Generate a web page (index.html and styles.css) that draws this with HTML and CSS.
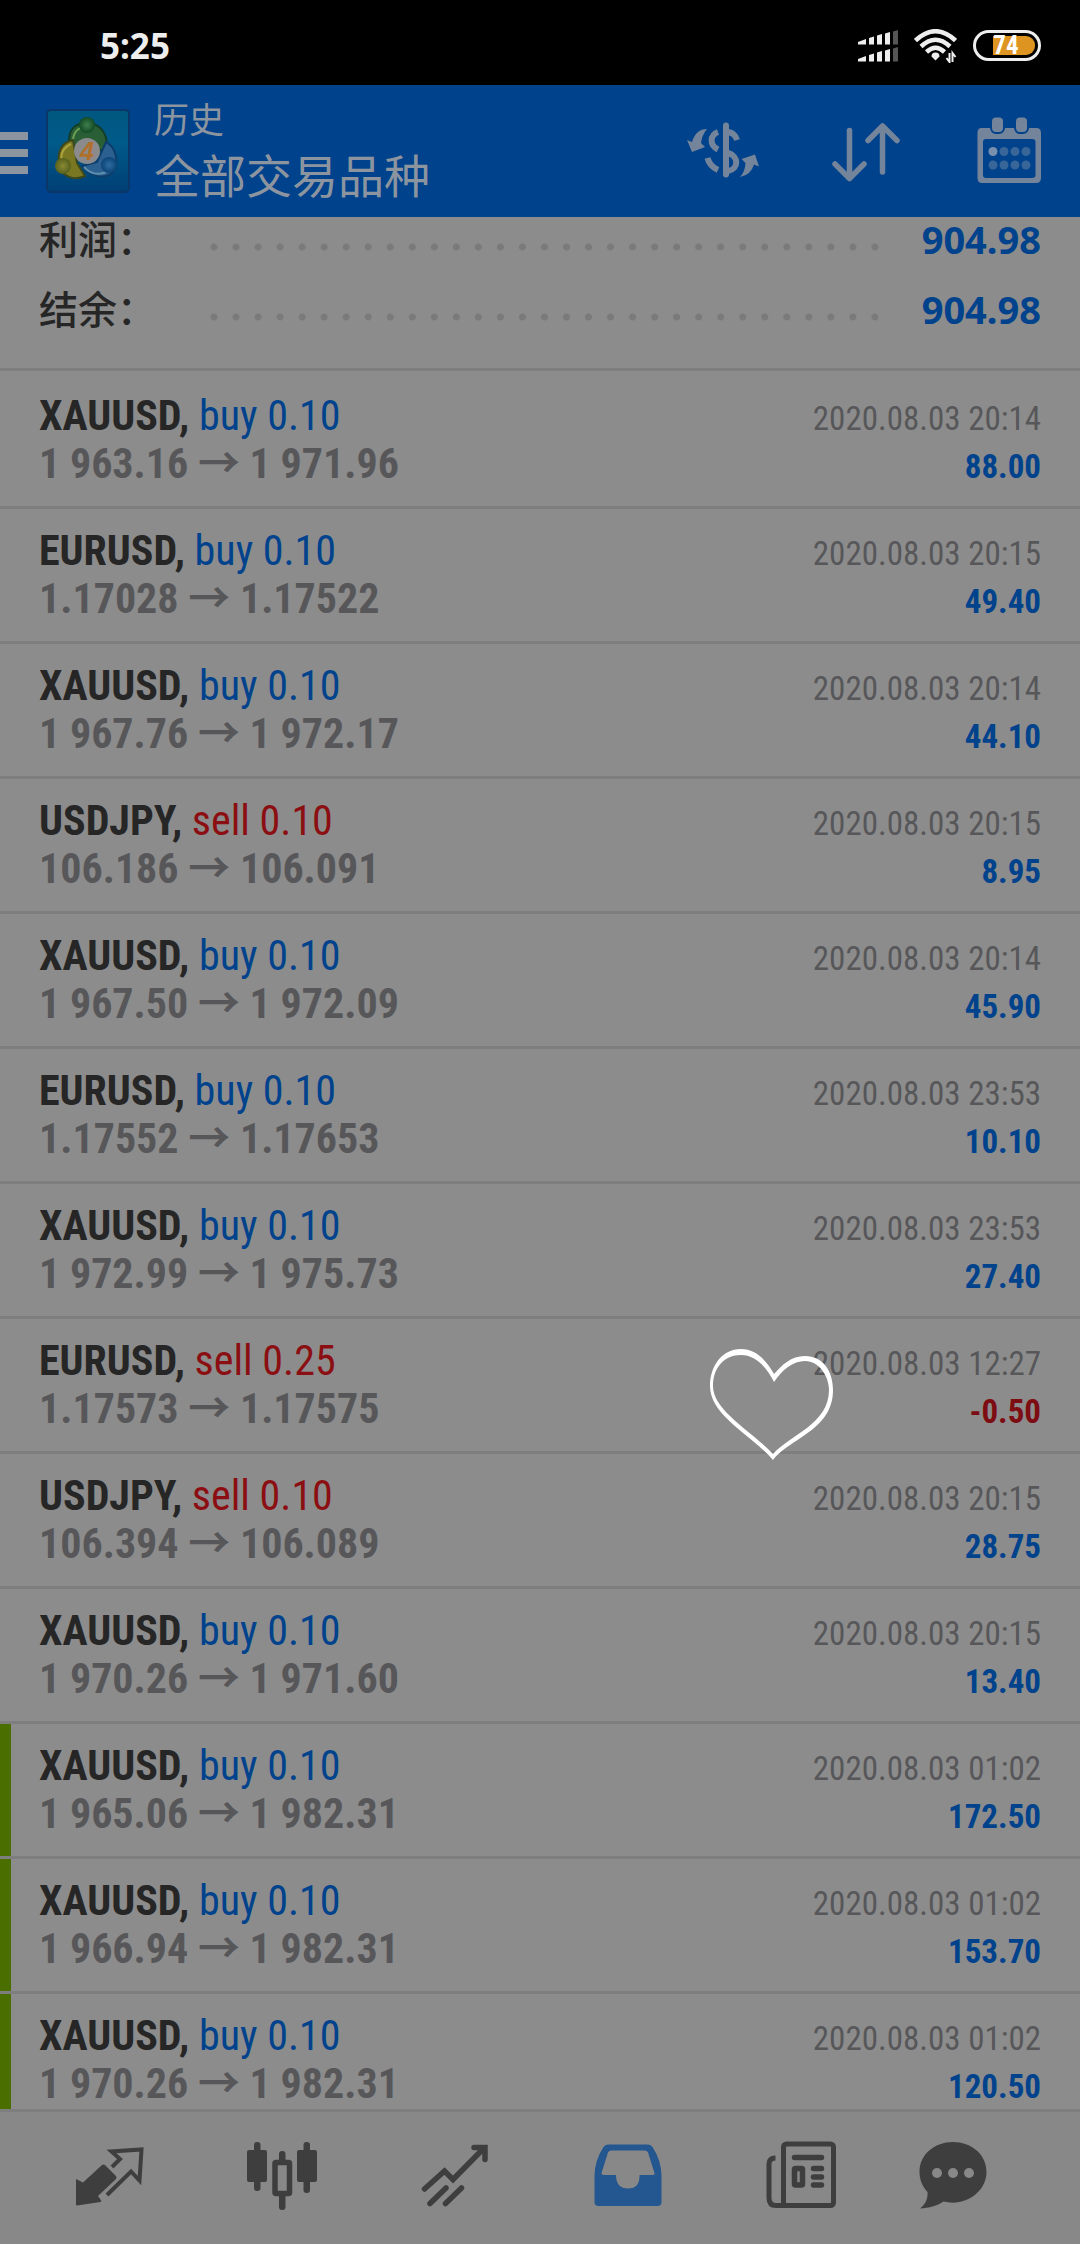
FILE: index.html
```html
<!DOCTYPE html>
<html lang="zh-CN">
<head>
<meta charset="utf-8">
<meta name="viewport" content="width=device-width, initial-scale=1">
<title>历史</title>
<link rel="stylesheet" href="styles.css">
</head>
<body>
<div class="status">
  <span class="clock">5:25</span>
  <div class="status-icons">
    <svg class="signal" viewBox="0 0 40 32" aria-hidden="true">
      <g fill="#eee"><path d="M0 12l8-3v5.500H0zM11 8l5-1.500v8h-5zM19 5.500l5-1.500v10.500h-5zM27 3.500l5-1.500v12.500h-5z"/><path d="M0 29l8-3v5.500H0zM11 25l5-1.500v8h-5zM19 22.500l5-1.500v10.500h-5zM27 20.500l5-1.500v12.500h-5z"/></g>
      <path d="M35 1.500L40 0v14.500h-5zM35 18.500L40 17v14.500h-5z" fill="#555"/>
    </svg>
    <svg class="wifi" viewBox="0 0 43 34" aria-hidden="true">
      <g fill="none" stroke="#eee" stroke-width="4.500"><path d="M1.500 11.500Q21.500-7 41.500 11.500"/><path d="M7 17.500Q21.500 4 36 17.500"/><path d="M12.500 23Q21.500 14.500 30.500 23"/></g>
      <path d="M21.500 31.500l-4-4q0-4 4-4t4 4z" fill="#eee"/>
      <path d="M35.500 24v9l-3-4M38.500 33v-9l3 4" fill="none" stroke="#eee" stroke-width="2"/>
    </svg>
    <span class="battery"><span class="charge"></span><span class="level">74</span></span>
  </div>
</div>

<header class="appbar">
  <button class="menu" aria-label="菜单"><i></i><i></i><i></i></button>
  <svg class="logo" viewBox="0 0 84 84" aria-hidden="true">
    <defs>
      <linearGradient id="lbg" x1="0" y1="0" x2="0" y2="1"><stop offset="0" stop-color="#00577f"/><stop offset=".4" stop-color="#005a8a"/><stop offset="1" stop-color="#003f75"/></linearGradient>
      <radialGradient id="lg"><stop offset="0" stop-color="#3f7f4c"/><stop offset="1" stop-color="#134a25"/></radialGradient>
      <radialGradient id="ly"><stop offset="0" stop-color="#8b8a34"/><stop offset="1" stop-color="#56601c"/></radialGradient>
      <radialGradient id="lb"><stop offset="0" stop-color="#2d6da0"/><stop offset="1" stop-color="#0c4477"/></radialGradient>
    </defs>
    <rect x="1" y="1" width="82" height="82" rx="4" fill="url(#lbg)" stroke="#0a3767" stroke-width="2"/>
    <g stroke-width="2">
      <path d="M23 35C22 18 31 14 41 14s20 7 20 23l-3 6-16-8-16 4z" fill="#2a5f35" stroke="#123e28"/>
      <path d="M27 31C28 21 33 18 41 18" fill="none" stroke="#6f9f55"/>
      <path d="M27 31C15 33 11 44 13 56c3 12 15 16 26 11l-8-13z" fill="#7a7722" stroke="#3c481b"/>
      <path d="M25 35c-8 4-11 10-9 18" fill="none" stroke="#aaa13a"/>
      <path d="M60 33c10 5 13 20 8 29-8 9-23 7-32-5l15-4z" fill="#2b6090" stroke="#0d3e6b"/>
      <path d="M38 58c7 8 16 8 22 5" fill="none" stroke="#5f8dac"/>
    </g>
    <circle cx="41" cy="16" r="8" fill="url(#lg)"/>
    <circle cx="17" cy="57" r="8" fill="url(#ly)"/>
    <circle cx="63" cy="56" r="8" fill="url(#lb)"/>
    <circle cx="41" cy="42" r="13" fill="#8b8b8e"/>
    <text x="41" y="51" text-anchor="middle" class="logo-four">4</text>
  </svg>
  <div class="titles">
    <h1>历史</h1>
    <p>全部交易品种</p>
  </div>
  <div class="actions">
    <button aria-label="货币">
      <svg class="icon" viewBox="0 0 72 72">
        <g fill="none" stroke="currentColor" stroke-width="6"><path d="M39 10.500v49" stroke-linecap="round"/><path d="M31 17C23 20 22 30 31 34.500M41 17q7 1 9 8M41 38c11 3 11 16 0 18M20.500 43q2 8 10.500 12"/></g>
        <path d="M20 14Q15 20 14 28l4 4-13 5L0 25l5 2Q9 14 20 14zM53 62q5-5 5.500-14l-4-4L68 39.500l4 12-5-2Q64 60 53 62z" fill="currentColor"/>
      </svg>
    </button>
    <button aria-label="排序">
      <svg class="icon" viewBox="0 0 72 72"><path d="M19.500 15.500V63M5 49l14.500 14.500L34 49M52.500 57V11M38 25.500L52.500 11 67 25.500" fill="none" stroke="currentColor" stroke-width="5.500" stroke-linecap="round" stroke-linejoin="round"/></svg>
    </button>
    <button aria-label="日期">
      <svg class="icon" viewBox="0 0 72 72">
        <path fill-rule="evenodd" d="M8.500 13h55q4.500 0 4.500 5v45q0 5-5 5H9q-4.500 0-4.500-5V18q0-5 4-5zM13 24q-3 0-3 3v33q0 3 3 3h46q3.500 0 3.500-3V27q0-3-3.500-3z" fill="currentColor"/>
        <g fill="currentColor" stroke="#00428c" stroke-width="2"><rect x="18" y="1.500" width="13" height="16.500" rx="5"/><rect x="42" y="1.500" width="13" height="16.500" rx="5"/></g>
        <circle cx="20" cy="36.500" r="4.500" fill="#7890ae"/>
        <g fill="#396698"><circle cx="31" cy="36.500" r="4.500"/><circle cx="42" cy="36.500" r="4.500"/><circle cx="53" cy="36.500" r="4.500"/><circle cx="20" cy="50" r="4.500"/><circle cx="31" cy="50" r="4.500"/><circle cx="42" cy="50" r="4.500"/><circle cx="53" cy="50" r="4.500"/></g>
      </svg>
    </button>
  </div>
</header>

<main class="history">
  <dl class="summary">
    <div class="total"><dt>利润：</dt><dd class="dots"></dd><dd>904.98</dd></div>
    <div class="total"><dt>结余：</dt><dd class="dots"></dd><dd>904.98</dd></div>
  </dl>
  <ul class="deals">
    <li class="deal"><p class="name"><b>XAUUSD,</b> <span class="buy">buy 0.10</span></p><time>2020.08.03 20:14</time><p class="prices">1 963.16 <span class="to">→</span> 1 971.96</p><p class="profit">88.00</p></li>
    <li class="deal"><p class="name"><b>EURUSD,</b> <span class="buy">buy 0.10</span></p><time>2020.08.03 20:15</time><p class="prices">1.17028 <span class="to">→</span> 1.17522</p><p class="profit">49.40</p></li>
    <li class="deal"><p class="name"><b>XAUUSD,</b> <span class="buy">buy 0.10</span></p><time>2020.08.03 20:14</time><p class="prices">1 967.76 <span class="to">→</span> 1 972.17</p><p class="profit">44.10</p></li>
    <li class="deal"><p class="name"><b>USDJPY,</b> <span class="sell">sell 0.10</span></p><time>2020.08.03 20:15</time><p class="prices">106.186 <span class="to">→</span> 106.091</p><p class="profit">8.95</p></li>
    <li class="deal"><p class="name"><b>XAUUSD,</b> <span class="buy">buy 0.10</span></p><time>2020.08.03 20:14</time><p class="prices">1 967.50 <span class="to">→</span> 1 972.09</p><p class="profit">45.90</p></li>
    <li class="deal"><p class="name"><b>EURUSD,</b> <span class="buy">buy 0.10</span></p><time>2020.08.03 23:53</time><p class="prices">1.17552 <span class="to">→</span> 1.17653</p><p class="profit">10.10</p></li>
    <li class="deal"><p class="name"><b>XAUUSD,</b> <span class="buy">buy 0.10</span></p><time>2020.08.03 23:53</time><p class="prices">1 972.99 <span class="to">→</span> 1 975.73</p><p class="profit">27.40</p></li>
    <li class="deal"><p class="name"><b>EURUSD,</b> <span class="sell">sell 0.25</span></p><time>2020.08.03 12:27</time><p class="prices">1.17573 <span class="to">→</span> 1.17575</p><p class="profit loss">-0.50</p>
      <svg class="heart" viewBox="0 0 144 130" aria-hidden="true"><path fill-rule="evenodd" d="M74 34C66 20 56 9 41 9 22 9 10 26 10 46c0 30 42 49 63 74C90 98 133 90 133 50 133 30 122 16 105 16 91 16 82 25 74 34zM74 42C67 28 56 15 41 15 24 15 13 28 13 46c0 25 40 46 60 68C90 95 129 84 129 50 129 36 119 21 105 21 93 21 82 30 74 42z"/></svg>
    </li>
    <li class="deal"><p class="name"><b>USDJPY,</b> <span class="sell">sell 0.10</span></p><time>2020.08.03 20:15</time><p class="prices">106.394 <span class="to">→</span> 106.089</p><p class="profit">28.75</p></li>
    <li class="deal"><p class="name"><b>XAUUSD,</b> <span class="buy">buy 0.10</span></p><time>2020.08.03 20:15</time><p class="prices">1 970.26 <span class="to">→</span> 1 971.60</p><p class="profit">13.40</p></li>
    <li class="deal marked"><p class="name"><b>XAUUSD,</b> <span class="buy">buy 0.10</span></p><time>2020.08.03 01:02</time><p class="prices">1 965.06 <span class="to">→</span> 1 982.31</p><p class="profit">172.50</p></li>
    <li class="deal marked"><p class="name"><b>XAUUSD,</b> <span class="buy">buy 0.10</span></p><time>2020.08.03 01:02</time><p class="prices">1 966.94 <span class="to">→</span> 1 982.31</p><p class="profit">153.70</p></li>
    <li class="deal marked"><p class="name"><b>XAUUSD,</b> <span class="buy">buy 0.10</span></p><time>2020.08.03 01:02</time><p class="prices">1 970.26 <span class="to">→</span> 1 982.31</p><p class="profit">120.50</p></li>
  </ul>
</main>

<nav class="tabs">
  <button aria-label="报价">
    <svg class="icon" viewBox="0 0 72 72"><path d="M3 39l7 3.500L29 25q1.500-1 3 0l11 11q1 1.500 0 3L25 56l3.500 5-1 1L4 65.500q-1 0-1-1z" fill="currentColor"/><path d="M39 27l8-8-8.500-7.500 30-2-2 31-8.500-9L34 55" fill="none" stroke="currentColor" stroke-width="4"/></svg>
  </button>
  <button aria-label="图表">
    <svg class="icon" viewBox="0 0 72 72"><g fill="currentColor"><rect x="1" y="10" width="20" height="32" rx="2"/><rect x="8" y="2" width="6.500" height="49" rx="3"/><rect x="51" y="10" width="20" height="32" rx="2"/><rect x="57.500" y="2" width="6.500" height="51" rx="3"/><rect x="33" y="11" width="6.500" height="13" rx="3"/><rect x="33" y="54" width="6.500" height="16" rx="3"/></g><rect x="29" y="22.500" width="14.500" height="31" fill="none" stroke="currentColor" stroke-width="5.500" rx="1"/></svg>
  </button>
  <button aria-label="交易">
    <svg class="icon" viewBox="0 0 72 72"><path d="M5.500 49L25.500 31l8.500 8.500L65 8M55 7.500h11v12M11 63.500L27 48M26.500 63.500l16-15.500" fill="none" stroke="currentColor" stroke-width="5.500" stroke-linecap="round" stroke-linejoin="miter"/></svg>
  </button>
  <button class="active" aria-label="历史" aria-current="page">
    <svg class="icon" viewBox="0 0 72 72"><path fill-rule="evenodd" d="M16 4.500h40q3 0 4.500 2.500Q69 20 69.500 35v27q0 4-4 4h-59q-4 0-4-4V35Q3 20 11.500 7 13 4.500 16 4.500zM19 10.500q-2 0-3 2L9.500 33q0 2 2 2H24q0 13.500 12 13.500T47.500 35H60q3 0 2.500-2L56 12.500q-1-2-3-2z" fill="currentColor"/></svg>
  </button>
  <button aria-label="新闻">
    <svg class="icon" viewBox="0 0 72 72"><g fill="none" stroke="currentColor" stroke-width="5"><rect x="18.500" y="4" width="50" height="61.500" rx="3"/><path d="M10.500 18Q4 18 4 24v34q0 7.500 7 7.500h10"/></g><g fill="none" stroke="currentColor" stroke-width="5.500" stroke-linecap="round"><path d="M29.500 17.500h27M48.500 28.500h8M48.500 37h8M48.500 45h8"/><rect x="29.500" y="28.500" width="8" height="16.500" rx="1"/></g></svg>
  </button>
  <button aria-label="消息">
    <svg class="icon" viewBox="0 0 72 72"><path d="M36 2C54 2 69.500 14 69.500 32 69.500 52 48 67 26.500 61.500 20 66 12 68 3 68.500 9 64 11 58 10.500 52 5 46 2.500 39 2.500 32 2.500 14 18 2 36 2z" fill="currentColor"/><g fill="#888"><circle cx="20" cy="33" r="5"/><circle cx="36" cy="33" r="5"/><circle cx="52" cy="33" r="5"/></g></svg>
  </button>
</nav>
</body>
</html>
```
FILE: styles.css
```css
* { box-sizing: border-box; margin: 0; padding: 0; }

body {
  display: flex;
  flex-direction: column;
  height: 100vh;
  background: #8c8c8c;
  color: #262626;
  font-family: "Roboto Condensed", Roboto, "Noto Sans CJK SC", sans-serif;
}

button {
  border: 0;
  background: none;
  color: inherit;
  font: inherit;
}

ul { list-style: none; }

.icon { display: block; width: 72px; height: 72px; }

/* Status bar */
.status {
  flex: none;
  display: flex;
  align-items: center;
  justify-content: space-between;
  height: 85px;
  padding: 6px 39px 0 100px;
  background: #000;
  color: #eee;
}

.clock { font: 700 35px/40px "Noto Sans", sans-serif; }

.status-icons { display: flex; align-items: center; gap: 16px; }
.signal { width: 40px; height: 32px; }
.wifi { width: 43px; height: 34px; }

.battery {
  display: flex;
  position: relative;
  width: 68px;
  height: 31px;
  padding: 3px;
  border: 3px solid #eee;
  border-radius: 16px;
}

.charge {
  width: 42px;
  margin-left: auto;
  border-radius: 0 9px 9px 0;
  background: #dd9420;
}

.level {
  position: absolute;
  inset: 0;
  padding-right: 2px;
  color: #fff;
  font: 700 25px/25px "Roboto Condensed", sans-serif;
  text-align: center;
}

/* App bar */
.appbar {
  flex: none;
  display: flex;
  align-items: center;
  height: 132px;
  background: #00428c;
  color: #8c959f;
}

.menu {
  display: flex;
  flex-direction: column;
  gap: 9px;
  width: 46px;
  padding-top: 4px;
}

.menu i { width: 28px; height: 8px; background: #8c959f; }

.logo { width: 84px; height: 84px; }

.logo-four {
  fill: #b0702c;
  font: italic 700 25px "Liberation Sans", sans-serif;
}

.titles {
  flex: 1;
  padding: 0 0 6px 24px;
  font-family: "Noto Sans CJK SC", sans-serif;
}

.titles h1 { font-size: 35px; font-weight: 400; line-height: 50px; }
.titles p { font-size: 46px; line-height: 60px; }

.actions { display: flex; color: #74849a; }

.actions button {
  display: grid;
  place-items: center;
  width: 143px;
  height: 132px;
}

/* History list */
.history { flex: 1; min-height: 0; overflow: hidden; }

.summary {
  display: flex;
  flex-direction: column;
  gap: 26px;
  padding: 0 39px 37px;
  border-bottom: 3px solid #7e7e7e;
}

.total { display: flex; height: 44px; }

.total dt {
  width: 164px;
  font-family: "Noto Sans CJK SC", sans-serif;
  font-size: 39px;
  font-weight: 500;
  line-height: 40px;
}

.total dd {
  color: #00428c;
  font: 700 38px/44px "Noto Sans", sans-serif;
}

.total .dots {
  flex: 1;
  margin-right: 36px;
  background: radial-gradient(circle at 11px 30px, #7a7a7a 3px, transparent 4px) 0 0 / 22px 44px round;
}

.deals { padding-top: 3px; }

.deal {
  display: grid;
  grid-template-columns: 1fr auto;
  grid-auto-rows: 48px;
  align-items: baseline;
  position: relative;
  padding: 18px 39px;
  border-bottom: 3px solid #7e7e7e;
}

.deal.marked { box-shadow: inset 11px 0 #4b6e00; }

.name, .prices { font-size: 42px; line-height: 48px; }
.name b, .prices, .profit { font-weight: 700; }
.buy { color: #00428c; }
.sell { color: #8b0f12; }
.prices { color: #57575a; }
.to { font-family: "Noto Sans CJK SC", sans-serif; font-weight: 700; line-height: 1px; }

.deal time, .profit {
  font-size: 33px;
  line-height: 42px;
  text-align: right;
}

.deal time { color: #57575a; }
.profit { color: #00428c; }
.profit.loss { color: #7d0d12; }

/* Floating reaction drawn over the list */
.heart {
  position: absolute;
  top: 21px;
  right: 236px;
  width: 144px;
  height: 130px;
  fill: #fff;
  z-index: 1;
}

/* Bottom tabs */
.tabs {
  flex: none;
  display: grid;
  grid-template-columns: repeat(5, 4fr) 3fr;
  height: 135px;
  padding: 28px 62px 0 22px;
  border-top: 3px solid #7e7e7e;
  background: #888;
  color: #3e3e3e;
}

.tabs button { display: flex; justify-content: center; }
.tabs .active { color: #24568f; }
```
